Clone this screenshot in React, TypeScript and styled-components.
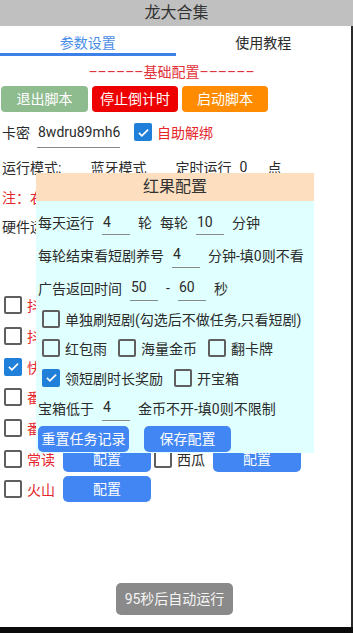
import React from "react";
import styled, { createGlobalStyle } from "styled-components";

const Global = createGlobalStyle`
  html, body { margin: 0; padding: 0; background: #ffffff; }
  body {
    font-family: Roboto, "Noto Sans CJK SC", sans-serif;
    font-size: 14px;
    color: #2b2b2b;
  }
  * { box-sizing: border-box; }
`;

const Screen = styled.div`
  position: relative;
  width: 353px;
  height: 633px;
  overflow: hidden;
  display: flex;
  flex-direction: column;
  background: #ffffff;
`;

const TitleBar = styled.header`
  flex: none;
  height: 26px;
  background: #c0c0c0;
  color: #333333;
  font-size: 16px;
  line-height: 26px;
  text-align: center;
`;

const Frame = styled.div`
  flex: 1;
  min-height: 0;
  display: flex;
  flex-direction: column;
  border-right: 2px solid #2a2a2a;
`;

const TabBar = styled.nav`
  flex: none;
  display: flex;
  height: 30px;
`;

const Tab = styled.div<{ $active?: boolean }>`
  flex: 1;
  padding-top: 8px;
  line-height: 19px;
  text-align: center;
  font-size: 14px;
  color: ${(p) => (p.$active ? "#4a8de6" : "#2b2b2b")};
  border-bottom: 3px solid ${(p) => (p.$active ? "#3d80e8" : "transparent")};
`;

const Content = styled.main`
  flex: 1;
  display: flex;
  flex-direction: column;
`;

const SectionTitle = styled.div`
  margin-top: 6px;
  padding-right: 8px;
  line-height: 20px;
  text-align: center;
  color: #e2323a;
`;

const ActionRow = styled.div`
  margin-top: 4px;
  display: flex;
  gap: 4px;
  padding-left: 1px;
`;

const ActionButton = styled.button<{ $bg: string; $w: number }>`
  width: ${(p) => p.$w}px;
  height: 26px;
  padding: 0;
  border: none;
  border-radius: 4px;
  background: ${(p) => p.$bg};
  color: #ffffff;
  font: inherit;
  font-size: 14px;
  line-height: 26px;
  text-align: center;
`;

const FieldRow = styled.div<{ $h: number; $mt?: number }>`
  display: flex;
  align-items: center;
  height: ${(p) => p.$h}px;
  margin-top: ${(p) => p.$mt ?? 0}px;
  padding-left: 2px;
  white-space: nowrap;
`;

const Label = styled.span<{ $ml?: number; $red?: boolean }>`
  margin-left: ${(p) => p.$ml ?? 0}px;
  color: ${(p) => (p.$red ? "#e4262c" : "#2b2b2b")};
  white-space: nowrap;
`;

const LineField = styled.span<{ $w: number; $h: number; $ml?: number; $pl?: number; $line?: boolean }>`
  display: inline-flex;
  align-items: center;
  width: ${(p) => p.$w}px;
  height: ${(p) => p.$h}px;
  margin-left: ${(p) => p.$ml ?? 0}px;
  padding-left: ${(p) => p.$pl ?? 1}px;
  border-bottom: 1px solid ${(p) => (p.$line === false ? "transparent" : "#8a8a8a")};
  color: #2b2b2b;
`;

const Box = styled.span<{ $on?: boolean; $ml?: number }>`
  flex: none;
  width: 18px;
  height: 18px;
  margin-left: ${(p) => p.$ml ?? 0}px;
  border-radius: 2px;
  border: 2px solid ${(p) => (p.$on ? "#1f7fd9" : "#5f5f5f")};
  background: ${(p) => (p.$on ? "#1f7fd9" : "transparent")};
  display: inline-flex;
  align-items: center;
  justify-content: center;
`;

function Check({ on, ml }: { on?: boolean; ml?: number }) {
  return (
    <Box $on={on} $ml={ml}>
      {on && (
        <svg width="13" height="13" viewBox="0 0 24 24">
          <path d="M3.5 12.5l5.5 5.5L20.5 6.5" fill="none" stroke="#ffffff" strokeWidth="3.2" />
        </svg>
      )}
    </Box>
  );
}

const AppList = styled.div`
  margin-top: 49px;
  display: flex;
  flex-direction: column;
`;

const AppRow = styled.div`
  display: flex;
  align-items: center;
  height: 30.67px;
  padding-left: 1px;
`;

const AppItem = styled.div`
  display: flex;
  align-items: center;
  margin-left: 3px;
`;

const AppName = styled.span<{ $red?: boolean }>`
  margin-left: 5px;
  width: 28px;
  color: ${(p) => (p.$red ? "#e4262c" : "#2b2b2b")};
  white-space: nowrap;
`;

const ConfigButton = styled.button`
  margin-left: 8px;
  width: 88px;
  height: 26px;
  padding: 0;
  border: none;
  border-radius: 5px;
  background: #4286f3;
  color: #ffffff;
  font: inherit;
  font-size: 14px;
  line-height: 26px;
`;

const NavStrip = styled.div`
  flex: none;
  height: 6px;
  background: #0b0b0b;
`;

/* dialog */
const Dialog = styled.section`
  position: absolute;
  left: 36px;
  top: 173px;
  width: 278px;
`;

const DialogHeader = styled.div`
  height: 28px;
  background: #fddfbf;
  color: #333333;
  font-size: 16px;
  line-height: 28px;
  text-align: center;
`;

const DialogBody = styled.div`
  background: #e0ffff;
  padding: 5px 0 1px 2px;
  display: flex;
  flex-direction: column;
`;

const FormRow = styled.div<{ $h: number }>`
  display: flex;
  align-items: center;
  gap: 8px;
  height: ${(p) => p.$h}px;
  white-space: nowrap;
`;

const CheckRow = styled.div`
  display: flex;
  align-items: center;
  gap: 11px;
  height: 29.5px;
  padding-left: 4px;
  white-space: nowrap;
`;

const CheckItem = styled.label`
  display: flex;
  align-items: center;
  gap: 5px;
`;

const DialogActions = styled.div`
  display: flex;
  gap: 15px;
  margin-top: 3.5px;
`;

const BlueButton = styled.button<{ $w: number }>`
  width: ${(p) => p.$w}px;
  height: 26px;
  padding: 0;
  border: none;
  border-radius: 5px;
  background: #4286f3;
  color: #ffffff;
  font: inherit;
  font-size: 14px;
  line-height: 26px;
`;

const Toast = styled.div`
  position: absolute;
  left: 116px;
  top: 583px;
  width: 117px;
  height: 32px;
  border-radius: 5px;
  background: #8a8a8a;
  color: #f5f5f5;
  font-size: 14px;
  line-height: 32px;
  text-align: center;
`;

/* rows hidden behind the dialog only show their checkbox and the first glyph */
type AppEntry = { name: string; on?: boolean; red?: boolean; button?: boolean };
const apps: AppEntry[][] = [
  [{ name: "抖音", red: true }],
  [{ name: "抖极", red: true }],
  [{ name: "快手", on: true, red: true }],
  [{ name: "番茄", red: true }],
  [{ name: "番免", red: true }],
  [{ name: "常读", red: true, button: true }, { name: "西瓜", button: true }],
  [{ name: "火山", red: true, button: true }],
];

export default function App() {
  return (
    <Screen>
      <Global />
      <TitleBar>龙大合集</TitleBar>
      <Frame>
        <TabBar>
          <Tab $active>参数设置</Tab>
          <Tab>使用教程</Tab>
        </TabBar>
        <Content>
          <SectionTitle>––––––基础配置––––––</SectionTitle>
          <ActionRow>
            <ActionButton $bg="#8fbc8f" $w={87}>退出脚本</ActionButton>
            <ActionButton $bg="#ee0000" $w={86}>停止倒计时</ActionButton>
            <ActionButton $bg="#ff8c00" $w={86}>启动脚本</ActionButton>
          </ActionRow>
          <FieldRow $h={32} $mt={4}>
            <Label>卡密</Label>
            <LineField $w={83} $h={32} $ml={7}>8wdru89mh6</LineField>
            <Check on ml={14} />
            <Label $ml={5} $red>自助解绑</Label>
          </FieldRow>
          <FieldRow $h={30} $mt={4}>
            <Label>运行模式:</Label>
            <Label $ml={29}>蓝牙模式</Label>
            <Label $ml={29}>定时运行</Label>
            <LineField $w={28} $h={26} $ml={4} $pl={4} $line={false}>0</LineField>
            <Label $ml={4}>点</Label>
          </FieldRow>
          <FieldRow $h={29}>
            <Label $red>注：右侧</Label>
          </FieldRow>
          <FieldRow $h={30}>
            <Label>硬件运行</Label>
          </FieldRow>
          <AppList>
            {apps.map((row, i) => (
              <AppRow key={i}>
                {row.map((a) => (
                  <AppItem key={a.name}>
                    <Check on={a.on} />
                    <AppName $red={a.red}>{a.name}</AppName>
                    {a.button && <ConfigButton>配置</ConfigButton>}
                  </AppItem>
                ))}
              </AppRow>
            ))}
          </AppList>
        </Content>
      </Frame>
      <NavStrip />

      <Dialog>
        <DialogHeader>红果配置</DialogHeader>
        <DialogBody>
          <FormRow $h={32}>
            <span>每天运行</span>
            <LineField $w={28} $h={26}>4</LineField>
            <span>轮</span>
            <span>每轮</span>
            <LineField $w={28} $h={26}>10</LineField>
            <span>分钟</span>
          </FormRow>
          <FormRow $h={33}>
            <span>每轮结束看短剧养号</span>
            <LineField $w={28} $h={26}>4</LineField>
            <span>分钟-填0则不看</span>
          </FormRow>
          <FormRow $h={33}>
            <span>广告返回时间</span>
            <LineField $w={28} $h={26}>50</LineField>
            <span>-</span>
            <LineField $w={28} $h={26}>60</LineField>
            <span>秒</span>
          </FormRow>
          <CheckRow>
            <CheckItem><Check /><span>单独刷短剧(勾选后不做任务,只看短剧)</span></CheckItem>
          </CheckRow>
          <CheckRow>
            <CheckItem><Check /><span>红包雨</span></CheckItem>
            <CheckItem><Check /><span>海量金币</span></CheckItem>
            <CheckItem><Check /><span>翻卡牌</span></CheckItem>
          </CheckRow>
          <CheckRow>
            <CheckItem><Check on /><span>领短剧时长奖励</span></CheckItem>
            <CheckItem><Check /><span>开宝箱</span></CheckItem>
          </CheckRow>
          <FormRow $h={30}>
            <span>宝箱低于</span>
            <LineField $w={28} $h={26}>4</LineField>
            <span>金币不开-填0则不限制</span>
          </FormRow>
          <DialogActions>
            <BlueButton $w={91}>重置任务记录</BlueButton>
            <BlueButton $w={87}>保存配置</BlueButton>
          </DialogActions>
        </DialogBody>
      </Dialog>

      <Toast>95秒后自动运行</Toast>
    </Screen>
  );
}
